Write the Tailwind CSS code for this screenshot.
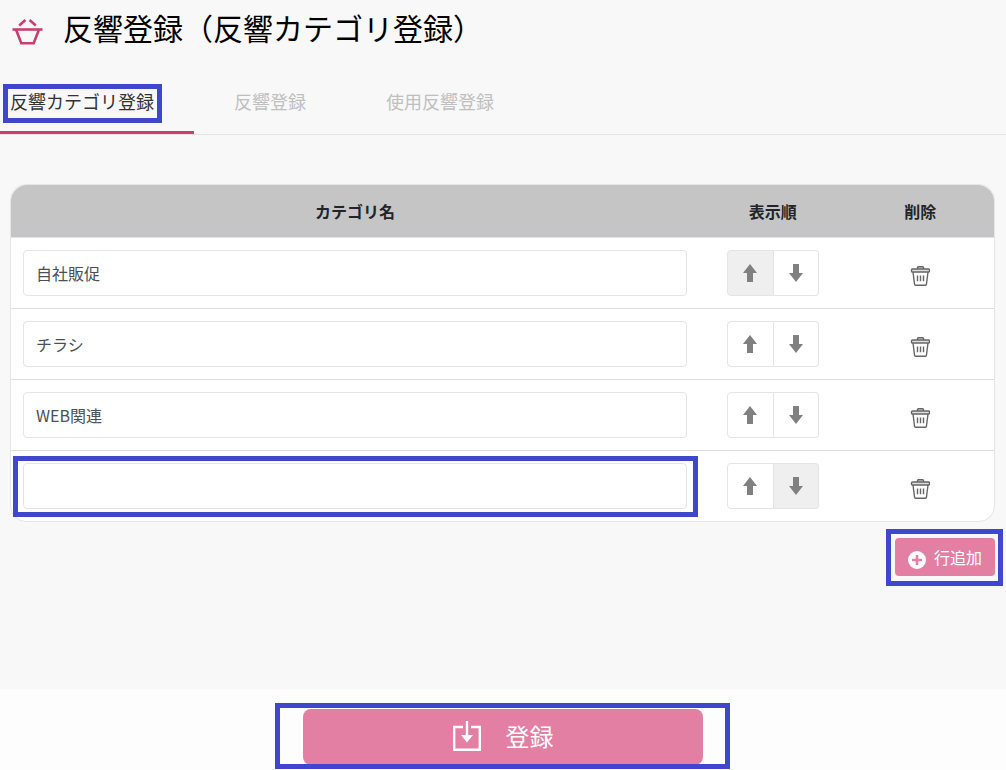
<!DOCTYPE html>
<html lang="ja">

<head>
    <meta charset="UTF-8">
    <meta name="viewport" content="width=device-width, initial-scale=1.0">
    <title>反響登録（反響カテゴリ登録）</title>
    <script src="https://cdn.jsdelivr.net/npm/@tailwindcss/browser@4"></script>
    <style>
        body {
            font-family: 'Noto Sans CJK JP', 'Noto Sans', sans-serif;
        }
    </style>
</head>

<body class="bg-[#f8f8f8] text-[#212529] flex flex-col min-h-screen">
    <!-- 共通アイコン -->
    <svg class="hidden">
        <symbol id="icon-up" viewBox="0 0 14 18">
            <path d="M7 0L14 9H10V18H4V9H0Z" fill="currentColor" />
        </symbol>
        <symbol id="icon-down" viewBox="0 0 14 18">
            <path d="M7 18L14 9H10V0H4V9H0Z" fill="currentColor" />
        </symbol>
        <symbol id="icon-trash" viewBox="0 0 20 20">
            <g fill="none" stroke="currentColor" stroke-width="1.4" stroke-linejoin="round">
                <path d="M7.5 3V1.6Q7.5 .7 8.4 .7H12.6Q13.5 .7 13.5 1.6V3" fill="#ddd" />
                <path d="M3 6L4.6 18.5Q4.7 19.3 5.5 19.3H15.5Q16.3 19.3 16.4 18.5L18 6" />
                <rect x="1.5" y="3" width="18" height="3" rx="1" fill="#ddd" />
                <path d="M7.5 9.5V15.2M10.5 9.5V15.2M13.5 9.5V15.2" />
            </g>
        </symbol>
    </svg>

    <header class="flex items-center gap-5 h-14 pl-3">
        <svg class="w-[31px] h-[27px] mt-1.5" viewBox="0 0 31 27" fill="none" stroke="#cb3f6e" stroke-width="2.6">
            <path d="M0.5 11.5H30.5" />
            <path d="M4 11.5L9.3 25.2H21.7L27 11.5" />
            <path d="M7.2 7.5L13.4 2M23.8 7.5L17.6 2" />
        </svg>
        <h1 class="text-3xl text-black -mt-0.5">反響登録（反響カテゴリ登録）</h1>
    </header>

    <nav class="flex mt-4 border-b border-[#e4e4e4] text-lg leading-7 text-[#bfbfbf]">
        <a href="#category" class="relative pl-2.5 pr-10 pt-[15px] pb-4 border-b-3 border-[#cb3f6e] text-[#333]">
            反響カテゴリ登録
            <span class="absolute left-[3px] top-3 w-[159px] h-[39px] border-5 border-[#3f48cc]"></span>
        </a>
        <a href="#response" class="px-10 pt-[15px]">反響登録</a>
        <a href="#used" class="px-10 pt-[15px]">使用反響登録</a>
    </nav>

    <main class="mt-[49px] ml-2.5 mr-[11px]">
        <div class="bg-white border border-[#e6e6e6] rounded-2xl">
            <table class="w-full table-fixed border-separate border-spacing-0">
                <thead>
                    <tr class="h-[53px]">
                        <th class="w-[70%] bg-[#c5c5c5] border-b border-[#dee2e6] rounded-tl-2xl">カテゴリ名</th>
                        <th class="w-[15%] bg-[#c5c5c5] border-b border-[#dee2e6]">表示順</th>
                        <th class="w-[15%] bg-[#c5c5c5] border-b border-[#dee2e6] rounded-tr-2xl">削除</th>
                    </tr>
                </thead>
                <tbody>
                    <tr>
                        <td class="p-3 border-b border-[#dedede]">
                            <input type="text" aria-label="カテゴリ名 1" value="自社販促" class="block w-full h-[46px] px-3 border border-[#e4e4e4] rounded text-[#495057]">
                        </td>
                        <td class="p-3 border-b border-[#dedede]">
                            <div class="flex justify-center text-[#808080]">
                                <button type="button" disabled aria-label="上へ" class="flex items-center justify-center w-[47px] h-[46px] bg-[#efefef] border border-[#e4e4e4] rounded-l"><svg class="w-3.5 h-[18px]"><use href="#icon-up" /></svg></button>
                                <button type="button" aria-label="下へ" class="flex items-center justify-center w-[45px] h-[46px] border border-l-0 border-[#e4e4e4] rounded-r"><svg class="w-3.5 h-[18px]"><use href="#icon-down" /></svg></button>
                            </div>
                        </td>
                        <td class="p-3 border-b border-[#dedede]">
                            <button type="button" aria-label="削除" class="block mx-auto pt-1.5 text-[#666]"><svg class="size-5"><use href="#icon-trash" /></svg></button>
                        </td>
                    </tr>
                    <tr>
                        <td class="p-3 border-b border-[#dedede]">
                            <input type="text" aria-label="カテゴリ名 2" value="チラシ" class="block w-full h-[46px] px-3 border border-[#e4e4e4] rounded text-[#495057]">
                        </td>
                        <td class="p-3 border-b border-[#dedede]">
                            <div class="flex justify-center text-[#808080]">
                                <button type="button" aria-label="上へ" class="flex items-center justify-center w-[47px] h-[46px] border border-[#e4e4e4] rounded-l"><svg class="w-3.5 h-[18px]"><use href="#icon-up" /></svg></button>
                                <button type="button" aria-label="下へ" class="flex items-center justify-center w-[45px] h-[46px] border border-l-0 border-[#e4e4e4] rounded-r"><svg class="w-3.5 h-[18px]"><use href="#icon-down" /></svg></button>
                            </div>
                        </td>
                        <td class="p-3 border-b border-[#dedede]">
                            <button type="button" aria-label="削除" class="block mx-auto pt-1.5 text-[#666]"><svg class="size-5"><use href="#icon-trash" /></svg></button>
                        </td>
                    </tr>
                    <tr>
                        <td class="p-3 border-b border-[#dedede]">
                            <input type="text" aria-label="カテゴリ名 3" value="WEB関連" class="block w-full h-[46px] px-3 border border-[#e4e4e4] rounded text-[#495057]">
                        </td>
                        <td class="p-3 border-b border-[#dedede]">
                            <div class="flex justify-center text-[#808080]">
                                <button type="button" aria-label="上へ" class="flex items-center justify-center w-[47px] h-[46px] border border-[#e4e4e4] rounded-l"><svg class="w-3.5 h-[18px]"><use href="#icon-up" /></svg></button>
                                <button type="button" aria-label="下へ" class="flex items-center justify-center w-[45px] h-[46px] border border-l-0 border-[#e4e4e4] rounded-r"><svg class="w-3.5 h-[18px]"><use href="#icon-down" /></svg></button>
                            </div>
                        </td>
                        <td class="p-3 border-b border-[#dedede]">
                            <button type="button" aria-label="削除" class="block mx-auto pt-1.5 text-[#666]"><svg class="size-5"><use href="#icon-trash" /></svg></button>
                        </td>
                    </tr>
                    <tr>
                        <td class="relative p-3">
                            <input type="text" aria-label="カテゴリ名 4" class="block w-full h-[46px] px-3 border border-[#e4e4e4] rounded text-[#495057]">
                            <span class="absolute left-0.5 right-px top-[5px] bottom-1 border-5 border-[#3f48cc] pointer-events-none"></span>
                        </td>
                        <td class="p-3">
                            <div class="flex justify-center text-[#808080]">
                                <button type="button" aria-label="上へ" class="flex items-center justify-center w-[47px] h-[46px] border border-[#e4e4e4] rounded-l"><svg class="w-3.5 h-[18px]"><use href="#icon-up" /></svg></button>
                                <button type="button" disabled aria-label="下へ" class="flex items-center justify-center w-[45px] h-[46px] bg-[#efefef] border border-l-0 border-[#e4e4e4] rounded-r"><svg class="w-3.5 h-[18px]"><use href="#icon-down" /></svg></button>
                            </div>
                        </td>
                        <td class="p-3">
                            <button type="button" aria-label="削除" class="block mx-auto pt-1.5 text-[#666]"><svg class="size-5"><use href="#icon-trash" /></svg></button>
                        </td>
                    </tr>
                </tbody>
            </table>
        </div>

        <div class="flex justify-end mt-4">
            <div class="relative">
                <button type="button" class="flex items-center gap-2 h-[38px] px-[13px] rounded bg-[#e37fa2] text-white">
                    <svg class="size-[18px] mt-1.5" viewBox="0 0 18 18">
                        <circle cx="9" cy="9" r="9" fill="#fff" />
                        <path d="M9 4V14M4 9H14" stroke="#e37fa2" stroke-width="2.6" />
                    </svg>
                    行追加
                </button>
                <span class="absolute -left-[9px] -right-2 -top-[9px] -bottom-2.5 border-5 border-[#3f48cc] pointer-events-none"></span>
            </div>
        </div>
    </main>

    <footer class="mt-auto flex justify-center pt-5 pb-[5px] bg-[#fdfdfd]">
        <div class="relative">
            <button type="submit" class="flex items-center justify-center gap-[25px] w-[400px] h-14 pb-0.5 rounded-lg bg-[#e37fa2] text-white text-2xl">
                <svg class="w-7 h-[30px]" viewBox="0 0 28 30" fill="none" stroke="#fff">
                    <path d="M10 6H1.2V28.8H26.8V6H18" stroke-width="2.4" />
                    <path d="M14 0V15" stroke-width="2.4" />
                    <path d="M8 14H20L14 21.5Z" fill="#fff" stroke="none" />
                </svg>
                登録
            </button>
            <span class="absolute -left-7 -right-[27px] -top-1.5 -bottom-1 border-5 border-[#3f48cc] pointer-events-none"></span>
        </div>
    </footer>
</body>

</html>
